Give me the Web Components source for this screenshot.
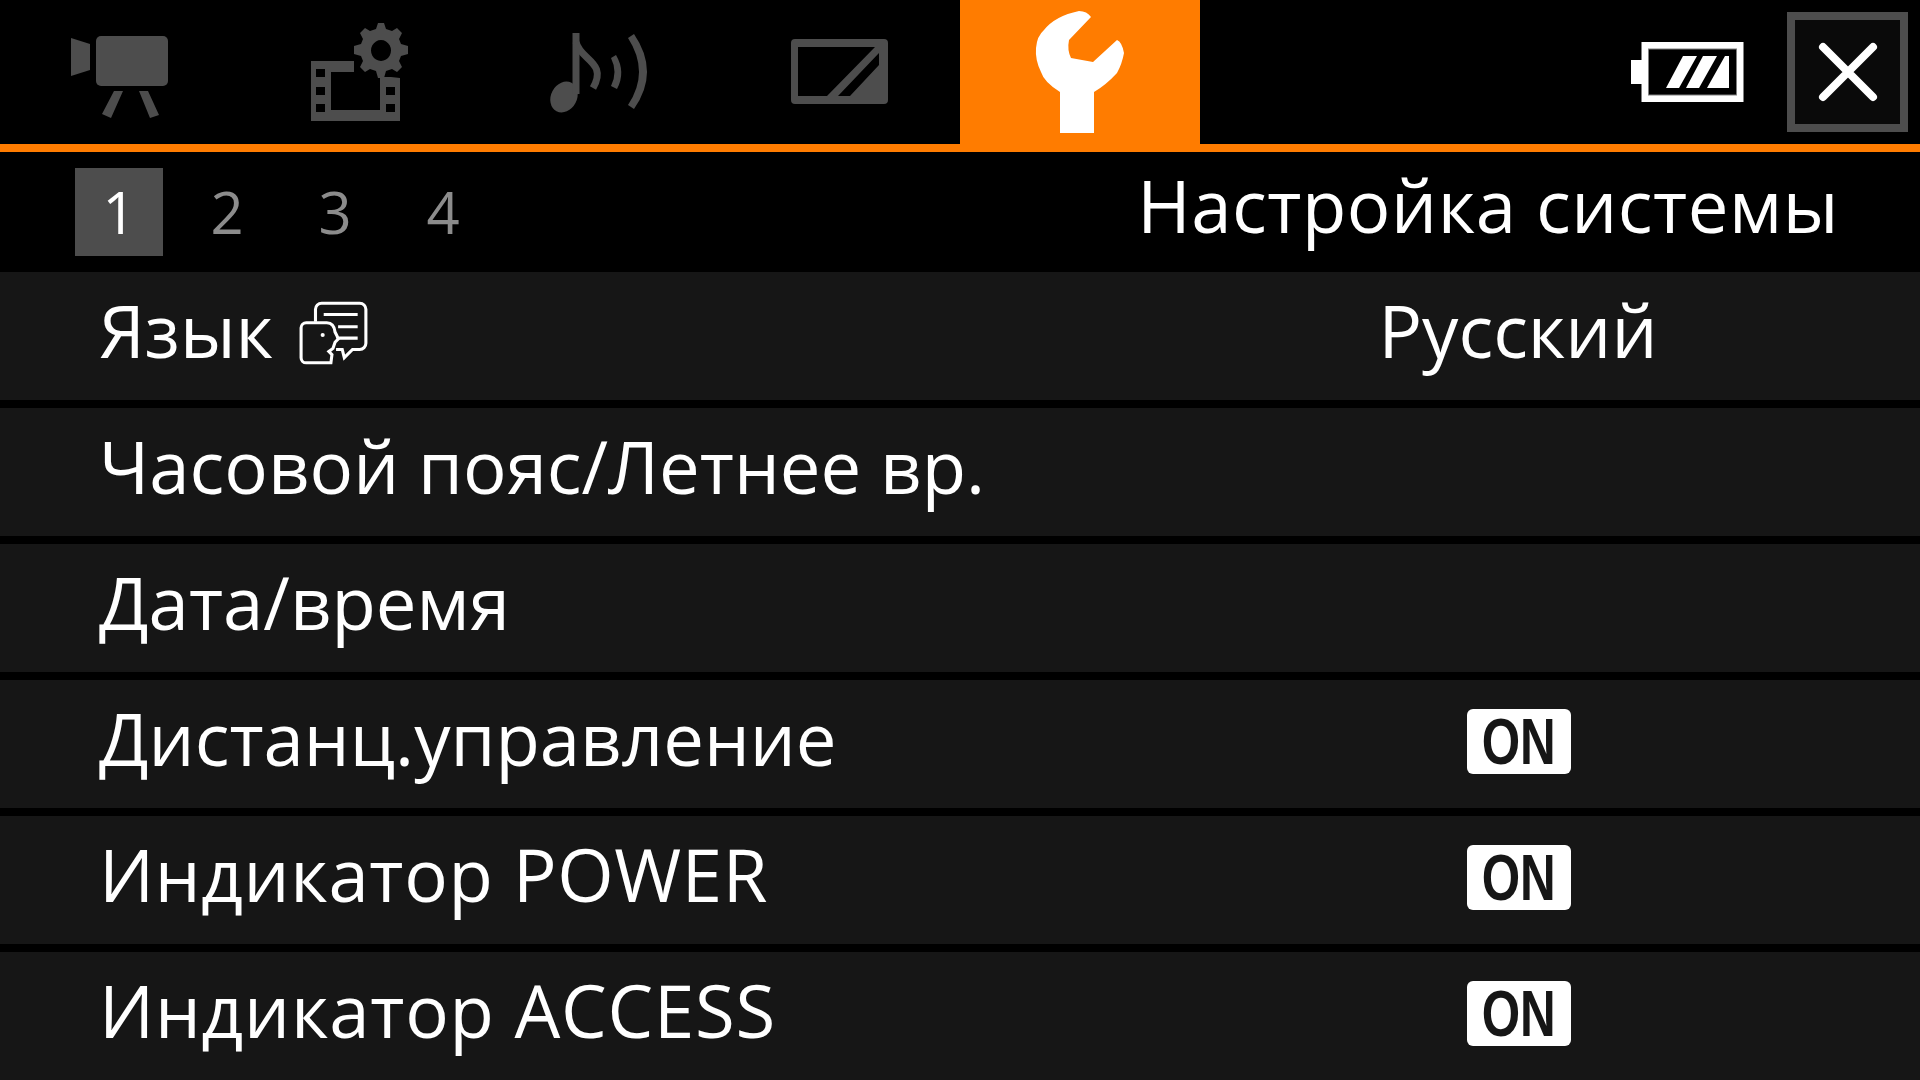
<!DOCTYPE html>
<html lang="ru"><head><meta charset="utf-8"><title>Настройка системы</title>
<style>
html,body{margin:0;padding:0;background:#000}
body{width:1920px;height:1080px;overflow:hidden;font-family:"Open Sans","Noto Sans",sans-serif;color:#fff}
cam-screen{display:block}
</style></head><body>
<cam-screen>
  <top-bar>
    <tab-item><svg viewBox="0 0 240 144" width="240" height="144" fill="#4d4d4d"><path d="M71 38 90 44V70L71 76Z"/><rect x="96" y="36" width="72" height="50" rx="5"/><path d="M114 91h9L111 118l-9-4ZM139 91h9l11 24-9 3Z"/></svg></tab-item>
    <tab-item><svg viewBox="240 0 240 144" width="240" height="144" fill="#4d4d4d"><path fill-rule="evenodd" d="M311 61H354V72H331V110H380V77L391 77 400 78V121H311ZM316 69v8h9v-8ZM316 87v8h9v-8ZM316 104v8h9v-8ZM386 87v8h9v-8ZM386 104v8h9v-8Z"/><path fill-rule="evenodd" d="M378 23h6l2 6 6 2 5-3 5 5-3 6 2 5 7 2v8l-7 2-2 5 3 6-5 5-5-3-6 2-2 7h-6l-2-7-6-2-5 3-5-5 3-6-2-5-7-2v-8l7-2 2-5-3-6 5-5 5 3 6-2ZM381 40a10 10.500 0 1 0 .01 0Z"/></svg></tab-item>
    <tab-item><svg viewBox="480 0 240 144" width="240" height="144" fill="#4d4d4d"><ellipse cx="564" cy="97" rx="13" ry="16" transform="rotate(28 564 97)"/><path d="M576 33V94" stroke="#4d4d4d" stroke-width="7" fill="none"/><path d="M576 42C580 60 608 62 593 88" stroke="#4d4d4d" stroke-width="7" fill="none"/><path d="M611 58 616 55Q626 72 617 89L611 86Q618 72 611 58ZM628 38 634 34Q660 72 634 109L628 105Q650 72 628 38Z"/></svg></tab-item>
    <tab-item><svg viewBox="720 0 240 144" width="240" height="144"><path fill="#4d4d4d" fill-rule="evenodd" d="M795 39H884a4 4 0 0 1 4 4V100a4 4 0 0 1-4 4H795a4 4 0 0 1-4-4V43a4 4 0 0 1 4-4ZM798 47V96H827L875 47ZM879 53 838 96H850L879 65Z"/></svg></tab-item>
    <tab-item active><svg viewBox="960 0 240 144" width="240" height="144"><path fill="#fff" d="M1079 11Q1087 11 1091 17L1069 40Q1067 50 1071 58L1093 62 1117 40Q1122 42 1124 53 1122 64 1117 73 1106 85 1094 92V133H1060V92Q1044 82 1041 72 1035 60 1036 48 1037 36 1044 30 1055 16 1079 11Z"/></svg></tab-item>
    <span slot="right" class="bat"><svg width="113" height="60" viewBox="1631 42 113 60"><path fill="#fff" d="M1631 60h11v24h-11Z"/><rect x="1645" y="45.500" width="95" height="53" fill="none" stroke="#fff" stroke-width="7"/><rect x="1648.500" y="49" width="88" height="46" fill="none" stroke="#808080" stroke-width="1"/><path fill="#fff" d="M1666 88 1683 56H1697L1679 88ZM1686 88 1703 56H1717L1699 88ZM1707 88 1725 56H1729V88Z"/></svg></span>
    <close-button slot="right"></close-button>
  </top-bar>
  <sub-bar title-text="Настройка системы"></sub-bar>
  <menu-list>
    <menu-row label="Язык" value="Русский"><svg slot="icon" width="72" height="64" viewBox="0 0 70 62" fill="none" stroke="#fff" stroke-width="3"><path d="M17 20V8a6 6 0 0 1 6-6H60a6 6 0 0 1 6 6V41a6 6 0 0 1-6 6H53L45 55 43 47H37"/><path d="M25 13H58M39 25H58M39 36H58"/><path d="M8 21H28Q35 21 36 30L38 34 39 37 36 40 34 46 30 49 33 52 32 60H8a5 5 0 0 1-5-5V26a5 5 0 0 1 5-5Z"/><circle cx="24" cy="33" r="2" fill="#fff" stroke="none"/></svg></menu-row>
    <menu-row label="Часовой пояс/Летнее вр."></menu-row>
    <menu-row label="Дата/время"></menu-row>
    <menu-row label="Дистанц.управление"><on-badge slot="value"></on-badge></menu-row>
    <menu-row label="Индикатор POWER" spacing=".65px"><on-badge slot="value"></on-badge></menu-row>
    <menu-row label="Индикатор ACCESS" spacing=".8px"><on-badge slot="value"></on-badge></menu-row>
  </menu-list>
</cam-screen>
<script>
function def(name, html, init){
  customElements.define(name, class extends HTMLElement{
    constructor(){super();this.attachShadow({mode:"open"}).innerHTML=html;}
    connectedCallback(){ if(init) init(this); }
  });
}
def("top-bar",`<style>:host{display:flex;height:144px;border-bottom:8px solid #ff7c00;background:#000}
.tabs{display:flex;flex:1}.r{display:flex;align-items:center}
::slotted(.bat){display:block;line-height:0;margin-right:43px}
</style><div class="tabs"><slot></slot></div><div class="r"><slot name="right"></slot></div>`);
def("tab-item",`<style>:host{display:block;width:240px;height:144px;line-height:0}
:host([active]){background:#ff7c00}::slotted(svg){display:block}</style><slot></slot>`);
def("close-button",`<style>:host{display:flex;align-items:center;justify-content:center;box-sizing:border-box;width:121px;height:120px;border:8px solid #4d4d4d;background:#0a0a0a;margin-right:12px}</style>
<svg width="60" height="60" viewBox="0 0 60 60"><path d="M5 5 55 55M55 5 5 55" stroke="#fff" stroke-width="8" stroke-linecap="round"/></svg>`);
def("sub-bar",`<style>:host{display:flex;height:120px;align-items:center;background:#000;padding:0 81px 0 75px;box-sizing:border-box;justify-content:space-between}
.n{display:flex;gap:20px;align-items:center}.p{width:88px;height:88px;display:flex;align-items:center;justify-content:center;font-size:58px;line-height:1;color:#8c8c8c}
.p.a{background:#4d4d4d;color:#fff}.t{font-size:72.500px;letter-spacing:.55px;line-height:1;position:relative;top:-7px;white-space:nowrap}</style>
<div class="n"><div class="p a"><span>1</span></div><div class="p"><span>2</span></div><div class="p"><span>3</span></div><div class="p"><span>4</span></div></div><div class="t" id="t"></div>`,
el=>{el.shadowRoot.getElementById("t").textContent=el.getAttribute("title-text");});
def("menu-list",`<style>:host{display:flex;flex-direction:column;gap:8px}</style><slot></slot>`);
def("menu-row",`<style>:host{display:flex;height:128px;background:#161616;align-items:center;padding:0 0 12px 99px;box-sizing:border-box;flex:none}
.l{font-size:72.500px;white-space:nowrap;line-height:1;display:flex;align-items:center;gap:25px}.g{flex:1}
.v{width:500px;margin-right:152px;display:flex;justify-content:center;font-size:72.500px;line-height:1;white-space:nowrap}
.v.b{margin-right:151px}
::slotted(svg){display:block;margin-top:6px}</style>
<div class="l"><span id="l"></span><slot name="icon"></slot></div><div class="g"></div><div class="v" id="c"><span id="v"></span><slot name="value"></slot></div>`,
el=>{const s=el.shadowRoot;s.getElementById("l").textContent=el.getAttribute("label");s.getElementById("l").style.letterSpacing=el.getAttribute("spacing")||"0";s.getElementById("v").textContent=el.getAttribute("value")||"";if(!el.hasAttribute("value"))s.getElementById("c").classList.add("b");});
def("on-badge",`<style>:host{display:flex;width:104px;height:65px;margin-top:7px;background:#fff;border-radius:6px;color:#161616;align-items:center;justify-content:center;font-family:"Liberation Sans",sans-serif;font-size:65px;font-weight:700;line-height:1}
span{display:inline-block;transform:scaleX(.76)}</style><span>ON</span>`);
def("cam-screen",`<style>:host{display:block;width:1920px;height:1080px;overflow:hidden}</style><slot></slot>`);
</script>
</body></html>
